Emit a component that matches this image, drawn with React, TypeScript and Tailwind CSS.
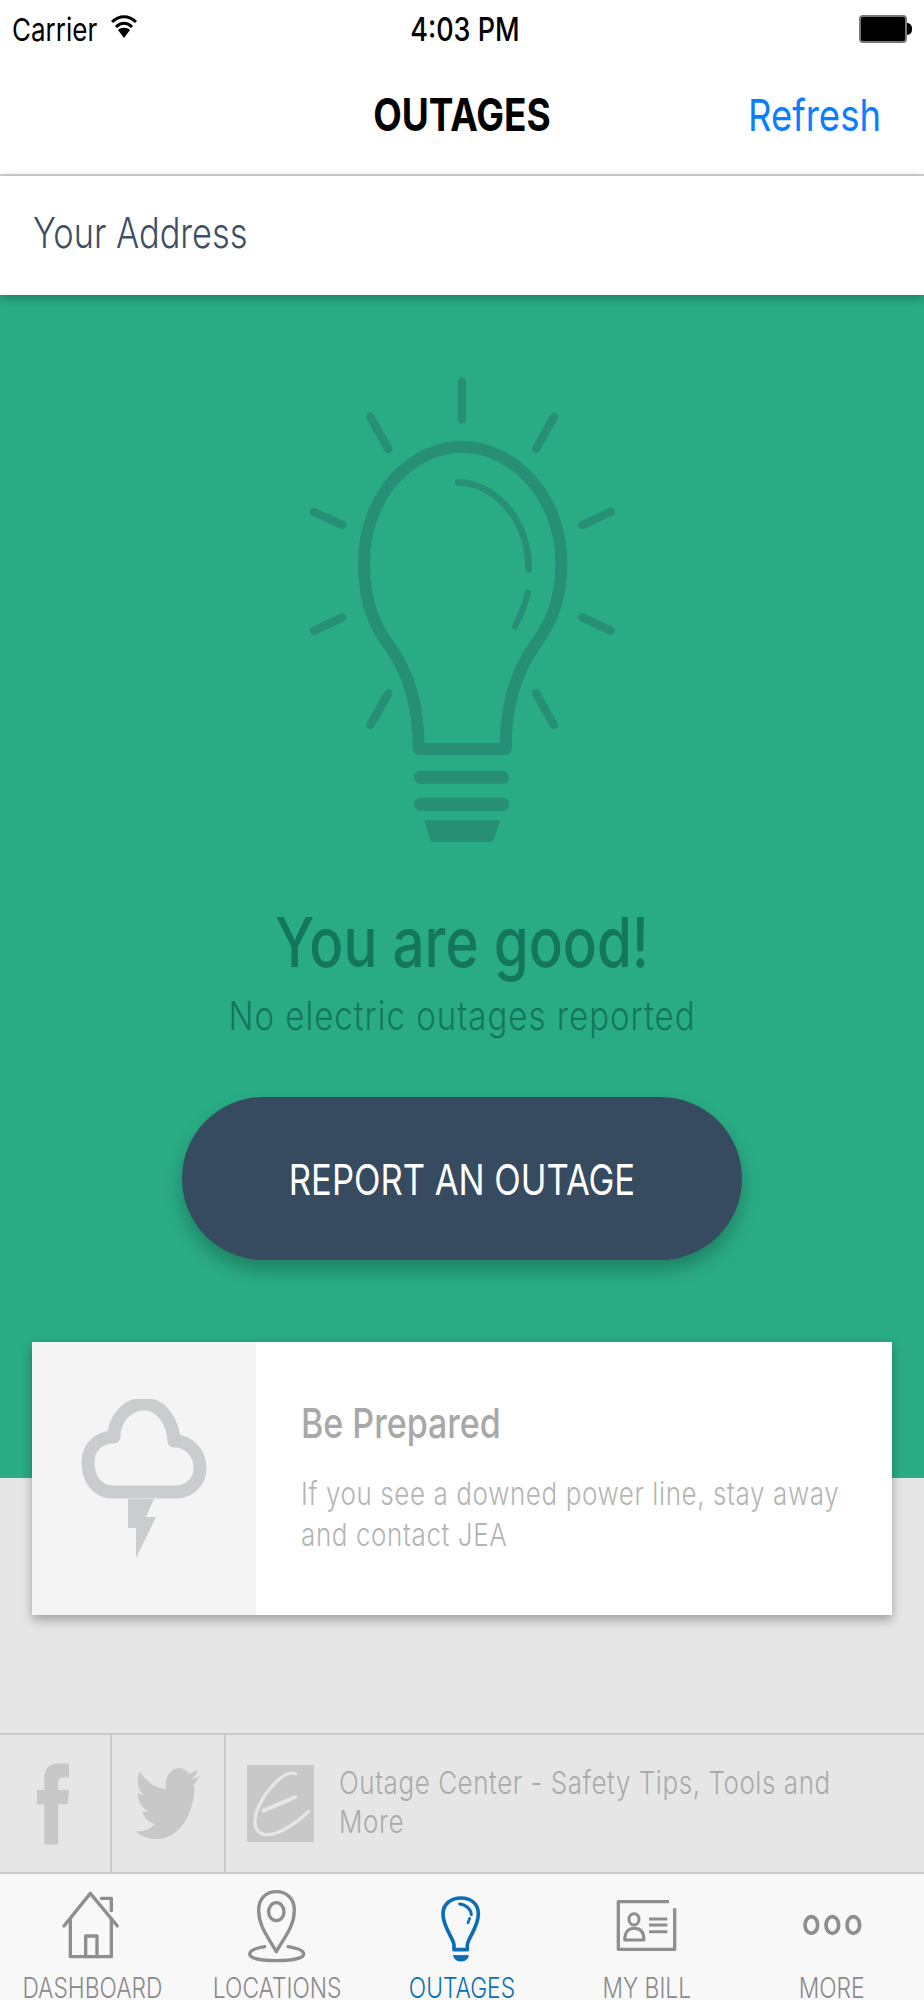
import React from "react";

const font = { fontFamily: "Inter, 'Liberation Sans', sans-serif" };

function Rays() {
  const rays = [
    [546, 65, 546, 178],
    [271, 171, 325, 267],
    [822, 171, 768, 267],
    [102, 456, 187, 495],
    [992, 456, 907, 495],
    [187, 772, 102, 812],
    [907, 772, 992, 812],
    [325, 1000, 271, 1095],
    [768, 1000, 822, 1095],
  ];
  return (
    <>
      {rays.map((r, i) => (
        <line key={i} x1={r[0]} y1={r[1]} x2={r[2]} y2={r[3]} strokeWidth={25} strokeLinecap="round" />
      ))}
    </>
  );
}

function BigBulb() {
  return (
    <svg viewBox="0 0 1092 1500" className="w-[364px] h-[500px] block" fill="none" stroke="#268f75">
      <Rays />
      <path
        d="M416 1167 C416 1060 395 950 330 860 C285 800 252 730 252 610 C252 400 400 260 546 260 C692 260 844 400 844 610 C844 730 805 800 762 860 C697 950 677 1060 677 1167 Z"
        strokeWidth={36}
        strokeLinejoin="round"
      />
      <path d="M535 367 C640 370 745 470 746 628" strokeWidth={20} strokeLinecap="round" />
      <path d="M744 697 C735 735 722 765 705 800" strokeWidth={18} strokeLinecap="round" />
      <line x1={421} y1={1252} x2={668} y2={1252} strokeWidth={39} strokeLinecap="round" />
      <line x1={421} y1={1333} x2={668} y2={1333} strokeWidth={39} strokeLinecap="round" />
      <path d="M433 1381 L660 1381 L642 1436 Q638 1446 628 1446 L464 1446 Q454 1446 450 1436 Z" fill="#268f75" stroke="none" />
    </svg>
  );
}

function Cloud() {
  return (
    <svg viewBox="0 0 126 160" className="w-[126px] h-[160px] block" fill="none">
      <path
        d="M32 93 C16 93 7 80 7 63 C7 48 18 38 33 38 C33 20 46 5 63 5 C80 5 92 22 93 42 C108 42 119 54 119 69 C119 83 108 93 95 93 Z"
        stroke="#c9cdce"
        strokeWidth={13}
        strokeLinejoin="round"
      />
      <path d="M47 100 L73 100 L65 118 L75 118 L55 159 L55 129 L47 129 Z" fill="#c9cdce" />
    </svg>
  );
}

function Facebook() {
  return (
    <svg viewBox="108 120 97 245" className="w-[32px] h-[82px] block mr-[4px]" fill="#c8c8c8">
      <path d="M130 365 L130 243 L108 243 L108 200 L130 200 L130 165 C130 135 145 120 175 120 L205 120 L205 162 L185 162 C175 162 172 168 172 178 L172 200 L205 200 L201 243 L172 243 L172 365 Z" />
    </svg>
  );
}

function Twitter() {
  return (
    <svg viewBox="0 0 512 416" preserveAspectRatio="none" className="w-[66px] h-[71px] block" fill="#c8c8c8">
      <path d="M459.37 104.4c.32 4.55.32 9.1.32 13.65 0 138.72-105.58 298.56-298.56 298.56-59.45 0-114.68-17.22-161.13-47.1 8.45.97 16.57 1.3 25.34 1.3 49.06 0 94.21-16.57 130.27-44.83-46.13-.97-84.79-31.19-98.11-72.77 6.5.97 12.99 1.62 19.82 1.62 9.42 0 18.84-1.3 27.61-3.57-48.08-9.75-84.14-51.98-84.14-102.99v-1.3c13.97 7.8 30.21 12.67 47.43 13.32-28.26-18.84-46.78-51-46.78-87.39 0-19.49 5.2-37.36 14.29-52.95C87.47 80.05 159.81 119.05 240.98 123.27c-1.62-7.8-2.6-15.92-2.6-24.04C238.38 41.4 285.16 0 343.3 0c30.21 0 57.5 12.67 76.67 33.14 23.71-4.55 46.46-13.32 66.6-25.34-7.8 24.04-24.04 44.18-45.48 56.85 21.02-2.27 41.51-8.12 60.34-16.24-14.29 20.79-32.16 39.31-52.65 54.25z" />
    </svg>
  );
}

function JeaLogo() {
  return (
    <div className="w-[67px] h-[77px] bg-[#c8c8c8] shrink-0">
      <svg viewBox="740 127 201 229" className="w-[67px] h-[77px] block" fill="none" stroke="#e6e6e6" strokeLinecap="round">
        <path d="M885 152 C850 140 800 200 775 250 C755 295 762 335 800 335 C840 335 895 295 925 265" strokeWidth={10} />
        <path d="M790 263 C820 250 855 235 885 222" strokeWidth={12} />
      </svg>
    </div>
  );
}

const G = "#8e8e8e";

function HouseIcon() {
  return (
    <svg viewBox="172 498 210 252" className="w-[70px] h-[84px] block" fill="none" stroke={G} strokeWidth={10} strokeLinecap="round" strokeLinejoin="round">
      <path d="M193 618 L272 520 L353 618" />
      <path d="M212 597 L212 710 L335 710 L335 597" />
      <path d="M258 710 L258 648 L292 648 L292 710" />
      <path d="M305 535 L335 535 L335 572" />
    </svg>
  );
}

function PinIcon() {
  return (
    <svg viewBox="727 498 210 252" className="w-[70px] h-[84px] block" fill="none" stroke={G} strokeWidth={10} strokeLinecap="round" strokeLinejoin="round">
      <path d="M830 695 C805 650 777 620 777 570 C777 535 800 515 830 515 C860 515 884 535 884 570 C884 620 855 650 830 695 Z" />
      <ellipse cx={830} cy={575} rx={23} ry={27} />
      <path d="M795 680 C765 685 750 692 750 702 C750 715 785 722 830 722 C875 722 912 715 912 702 C912 692 895 685 865 680" />
    </svg>
  );
}

function TabBulb() {
  return (
    <svg viewBox="-21 -30 210 252" className="w-[70px] h-[84px] block" fill="none" stroke="#0b6eb4" strokeLinecap="round" strokeLinejoin="round">
      <g transform="translate(-45,-36)">
        <path d="M105 197 L105 183 C105 165 72 130 72 90 C72 60 95 42 126 42 C157 42 178 60 178 90 C178 130 145 165 145 183 L145 197 Z" strokeWidth={11} />
        <path d="M122 60 C142 62 156 76 157 92" strokeWidth={9} />
        <path d="M152 103 L147 116" strokeWidth={8} />
        <path d="M104 215 L148 215 C146 226 138 231 126 231 C114 231 106 226 104 215 Z" fill="#0b6eb4" strokeWidth={3} />
      </g>
    </svg>
  );
}

function BillIcon() {
  return (
    <svg viewBox="449 498 210 252" className="w-[70px] h-[84px] block" fill="none" stroke={G} strokeWidth={10} strokeLinecap="butt" strokeLinejoin="round">
      <path d="M620 545 L468 545 L468 688 L637 688 L637 565" />
      <ellipse cx={515} cy={598} rx={15} ry={17} strokeWidth={9} />
      <path d="M487 660 C487 635 500 625 515 625 C532 625 545 635 545 660 Z" strokeWidth={9} />
      <path d="M560 597 L615 597 M560 615 L615 615 M560 635 L615 635" strokeWidth={9} />
    </svg>
  );
}

function MoreIcon() {
  return (
    <svg viewBox="1004 498 210 252" className="w-[70px] h-[84px] block" fill="none" stroke={G} strokeWidth={11}>
      <ellipse cx={1047} cy={615} rx={19} ry={25} />
      <ellipse cx={1110} cy={615} rx={19} ry={25} />
      <ellipse cx={1173} cy={615} rx={19} ry={25} />
    </svg>
  );
}

function Tab({ icon, label, active }: { icon: React.ReactNode; label: string; active?: boolean }) {
  return (
    <div className="flex-1 flex flex-col items-center pt-[12px]">
      {icon}
      <span
        className={`block scale-y-[1.217] mt-[9px] text-[22.8px] leading-[18px] font-light whitespace-nowrap ${active ? "text-[#0b6eb4]" : "text-[#8a8a8a]"}`}
      >
        {label}
      </span>
    </div>
  );
}

export default function App() {
  return (
    <div style={font} className="w-[924px] h-[2000px] overflow-hidden bg-white flex flex-col">
      {/* status bar */}
      <div className="h-[60px] flex items-center px-[12px] relative shrink-0">
        <span className="block scale-y-[1.217] text-[26px] leading-[30px] text-black">Carrier</span>
        <svg viewBox="0 0 26 25" className="w-[26px] h-[25px] ml-[14px] mb-[7px]" fill="none" stroke="#000" strokeWidth={3}>
          <path d="M1 8 C8 1 18 1 25 8" />
          <path d="M5 13 C10 8 16 8 21 13" />
          <path d="M13 24 L7 16 C10 13 16 13 19 16 Z" fill="#000" stroke="none" />
        </svg>
        <span className="absolute left-0 right-0 text-center block scale-y-[1.217] text-[27px] leading-[30px] font-medium text-black pl-[6px]">
          4:03 PM
        </span>
        <div className="ml-auto flex items-center mb-[2px]">
          <div className="w-[48px] h-[28px] rounded-[4px] bg-black border-[2px] border-[#777]" />
          <div className="w-[5px] h-[12px] bg-black rounded-r-full" />
        </div>
      </div>
      {/* nav */}
      <div className="h-[116px] shrink-0 border-b-2 border-[#d2d2d2] flex items-center relative pb-[5px]">
        <span className="absolute left-0 right-0 text-center block scale-y-[1.217] text-[37px] leading-[44px] font-bold text-black">
          OUTAGES
        </span>
        <span className="ml-auto mr-[43px] block scale-y-[1.217] text-[36.5px] leading-[44px] text-[#0a7eff]">Refresh</span>
      </div>
      {/* address */}
      <div className="h-[119px] shrink-0 bg-white flex items-center px-[33px] pb-[6px] relative z-10 shadow-[0_3px_10px_rgba(0,0,0,0.28)]">
        <span className="block scale-y-[1.217] text-[34.4px] leading-[40px] font-light text-[#3c4f63]">Your Address</span>
      </div>
      {/* green */}
      <div className="h-[1183px] shrink-0 bg-[#29ac84] flex flex-col items-center pt-[65px]">
        <BigBulb />
        <span className="block mt-[48px] scale-y-[1.217] text-[56.5px] leading-[70px] font-medium text-[#14775b] whitespace-nowrap">
          You are good!
        </span>
        <span className="block mt-[17px] scale-y-[1.217] text-[33px] leading-[40px] font-light tracking-[1px] text-[#14775b] whitespace-nowrap">
          No electric outages reported
        </span>
        <div className="mt-[62px] w-[560px] h-[163px] rounded-[82px] bg-[#364b5f] flex items-center justify-center shadow-[0_10px_18px_rgba(0,0,0,0.25)]">
          <span className="block scale-y-[1.217] text-[34.6px] leading-[42px] font-normal text-white whitespace-nowrap">
            REPORT AN OUTAGE
          </span>
        </div>
      </div>
      {/* gray */}
      <div className="h-[255px] shrink-0 bg-[#e6e6e6] px-[32px]">
        <div className="-mt-[136px] relative h-[273px] bg-white flex shadow-[0_5px_10px_rgba(0,0,0,0.3)]">
          <div className="w-[224px] shrink-0 bg-[#f4f4f4] flex items-center justify-center">
            <Cloud />
          </div>
          <div className="pl-[45px] pt-[57px]">
            <span className="block scale-y-[1.217] origin-top text-[34px] leading-[40px] font-medium text-[#a8a8a8] whitespace-nowrap">
              Be Prepared
            </span>
            <div className="mt-[34px] scale-y-[1.217] origin-top text-[26px] leading-[34px] font-light tracking-[0.6px] text-[#b4b4b4] whitespace-nowrap">
              <div>If you see a downed power line, stay away</div>
              <div>and contact JEA</div>
            </div>
          </div>
        </div>
      </div>
      {/* social strip */}
      <div className="h-[141px] shrink-0 bg-[#e6e6e6] border-y-2 border-[#c9cbcb] flex">
        <div className="w-[112px] border-r-2 border-[#c9cbcb] flex items-center justify-center">
          <Facebook />
        </div>
        <div className="w-[114px] border-r-2 border-[#c9cbcb] flex items-center justify-center">
          <Twitter />
        </div>
        <div className="flex-1 flex items-center pl-[21px]">
          <JeaLogo />
          <div className="ml-[25px] mb-[4px] scale-y-[1.217] text-[26px] leading-[31.5px] font-light tracking-[0.55px] text-[#ababab] whitespace-nowrap">
            <div>Outage Center - Safety Tips, Tools and</div>
            <div>More</div>
          </div>
        </div>
      </div>
      {/* tab bar */}
      <div className="flex-1 bg-[#f9f8f9] flex">
        <Tab icon={<HouseIcon />} label="DASHBOARD" />
        <Tab icon={<PinIcon />} label="LOCATIONS" />
        <Tab icon={<TabBulb />} label="OUTAGES" active />
        <Tab icon={<BillIcon />} label="MY BILL" />
        <Tab icon={<MoreIcon />} label="MORE" />
      </div>
    </div>
  );
}
